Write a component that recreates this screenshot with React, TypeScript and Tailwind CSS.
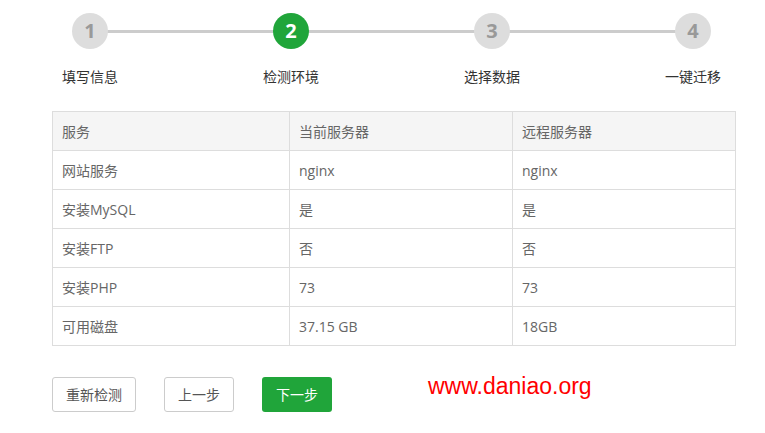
import React from "react";

const steps = [
  { n: "1", label: "填写信息", active: false },
  { n: "2", label: "检测环境", active: true },
  { n: "3", label: "选择数据", active: false },
  { n: "4", label: "一键迁移", active: false },
];

const rows = [
  ["网站服务", "nginx", "nginx"],
  ["安装MySQL", "是", "是"],
  ["安装FTP", "否", "否"],
  ["安装PHP", "73", "73"],
  ["可用磁盘", "37.15 GB", "18GB"],
];

export default function App() {
  return (
    <div
      className="w-[765px] h-[433px] bg-white relative overflow-hidden"
      style={{ fontFamily: '"Open Sans", "Noto Sans CJK SC", sans-serif' }}
    >
      {/* steps */}
      <div className="relative h-[100px]">
        <div className="absolute left-[90px] w-[604px] top-[30px] h-[3px] bg-[#cccccc]" />
        {steps.map((s, i) => (
          <div
            key={s.n}
            className="absolute top-[13px] w-[100px] flex flex-col items-center"
            style={{ left: 40 + i * 201 }}
          >
            <div
              className={
                "w-[36px] h-[36px] rounded-full flex items-center justify-center text-[20px] font-bold relative " +
                (s.active ? "bg-[#20a53a] text-white" : "bg-[#dddddd] text-[#999999]")
              }
            >
              {s.n}
            </div>
            <div className="mt-[18px] text-[14px] leading-[20px] text-[#333333]">{s.label}</div>
          </div>
        ))}
      </div>

      {/* table */}
      <div className="ml-[52px] mt-[11px] w-[684px]">
        <table className="w-full border-collapse text-[14px] text-[#666666]">
          <thead>
            <tr className="bg-[#f5f5f5] h-[39px]">
              <th className="border border-[#dddddd] text-left font-normal pl-[9px] w-[237px]">服务</th>
              <th className="border border-[#dddddd] text-left font-normal pl-[9px] w-[223px]">当前服务器</th>
              <th className="border border-[#dddddd] text-left font-normal pl-[9px]">远程服务器</th>
            </tr>
          </thead>
          <tbody>
            {rows.map((r) => (
              <tr key={r[0]} className="h-[39px]">
                {r.map((c, j) => (
                  <td key={j} className="border border-[#dddddd] pl-[9px]">
                    {c}
                  </td>
                ))}
              </tr>
            ))}
          </tbody>
        </table>
      </div>

      {/* buttons */}
      <div className="ml-[52px] mt-[31px] flex items-center">
        <button className="w-[84px] h-[35px] border border-[#cccccc] rounded-[3px] text-[14px] text-[#555555] bg-white">
          重新检测
        </button>
        <button className="ml-[28px] w-[70px] h-[35px] border border-[#cccccc] rounded-[3px] text-[14px] text-[#555555] bg-white">
          上一步
        </button>
        <button className="ml-[28px] w-[70px] h-[35px] rounded-[3px] text-[14px] text-white bg-[#20a53a]">
          下一步
        </button>
        <div
          className="ml-[96px] -mt-[17px] text-[23px] leading-[28px] text-[#ff0000]"
          style={{ fontFamily: '"Liberation Sans", Arial, sans-serif' }}
        >
          www.daniao.org
        </div>
      </div>
    </div>
  );
}
